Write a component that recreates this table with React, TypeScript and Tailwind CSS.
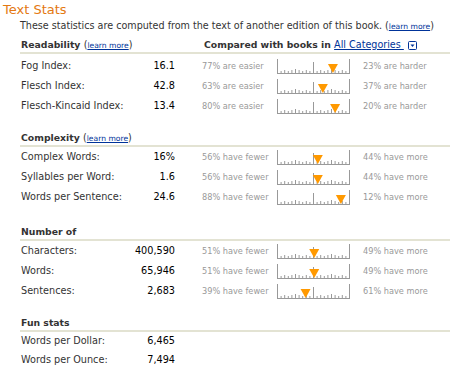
import React from "react";

type Row = {
  label: string;
  value: string;
  pct?: number; // marker position, 0-100
  left?: string;
  right?: string;
};

type Section = {
  title: string;
  learn?: boolean;
  compare?: boolean;
  gap: string;
  rows: Row[];
};

const sections: Section[] = [
  {
    title: "Readability",
    learn: true,
    compare: true,
    gap: "mt-[6px]",
    rows: [
      { label: "Fog Index:", value: "16.1", pct: 77, left: "77% are easier", right: "23% are harder" },
      { label: "Flesch Index:", value: "42.8", pct: 63, left: "63% are easier", right: "37% are harder" },
      { label: "Flesch-Kincaid Index:", value: "13.4", pct: 80, left: "80% are easier", right: "20% are harder" },
    ],
  },
  {
    title: "Complexity",
    learn: true,
    gap: "mt-[15px]",
    rows: [
      { label: "Complex Words:", value: "16%", pct: 56, left: "56% have fewer", right: "44% have more" },
      { label: "Syllables per Word:", value: "1.6", pct: 56, left: "56% have fewer", right: "44% have more" },
      { label: "Words per Sentence:", value: "24.6", pct: 88, left: "88% have fewer", right: "12% have more" },
    ],
  },
  {
    title: "Number of",
    gap: "mt-[18px]",
    rows: [
      { label: "Characters:", value: "400,590", pct: 51, left: "51% have fewer", right: "49% have more" },
      { label: "Words:", value: "65,946", pct: 51, left: "51% have fewer", right: "49% have more" },
      { label: "Sentences:", value: "2,683", pct: 39, left: "39% have fewer", right: "61% have more" },
    ],
  },
  {
    title: "Fun stats",
    gap: "mt-[15px]",
    rows: [
      { label: "Words per Dollar:", value: "6,465" },
      { label: "Words per Ounce:", value: "7,494" },
    ],
  },
];

const Learn = () => (
  <span className="text-[9.6px] font-normal text-[#333]">
    (<a href="#" className="text-[7.6px] text-[#003399] underline">learn more</a>)
  </span>
);

const Scale = ({ pct }: { pct: number }) => {
  const ticks = [];
  for (let i = 1; i < 20; i++) {
    let h = i % 2 ? 2 : 3;
    if (i === 10) h = 11;
    else if (i % 5 === 0) h = 4;
    const x = 0.5 + i * 3.6;
    ticks.push(<line key={i} x1={x} x2={x} y1={14 - h} y2={14} stroke="#999" strokeWidth="1" />);
  }
  const cx = 0.5 + (pct / 100) * 72;
  return (
    <svg width="74" height="15" viewBox="0 0 74 15" className="block">
      <line x1="0.5" x2="0.5" y1="0" y2="15" stroke="#999" />
      <line x1="72.5" x2="72.5" y1="0" y2="15" stroke="#999" />
      <line x1="0" x2="73" y1="14.5" y2="14.5" stroke="#999" />
      {ticks}
      <polygon points={`${cx - 5},5 ${cx + 5},5 ${cx},14`} fill="#ff9900" />
    </svg>
  );
};

export default function App() {
  return (
    <div className="w-[450px] h-[378px] bg-white text-[#333] font-['DejaVu_Sans',Verdana,sans-serif] overflow-hidden">
      <div className="h-[19px] pl-[3px] text-[13px] leading-[19px] text-[#e47911]">Text Stats</div>
      <div className="h-[13px] pl-[20px] text-[9.6px] leading-[13px] whitespace-nowrap">
        These statistics are computed from the text of another edition of this book. <Learn />
      </div>

      {sections.map((s) => (
        <div key={s.title} className={`${s.gap} pl-[20px]`}>
          <div className="flex h-[14px] items-center text-[9.3px] font-bold leading-[14px] whitespace-nowrap">
            <div className="w-[184px] pl-px">
              {s.title} {s.learn && <Learn />}
            </div>
            {s.compare && (
              <div className="flex items-center">
                Compared with books in&nbsp;
                <a href="#" className="text-[9.6px] font-normal text-[#003399] underline">All Categories&nbsp;</a>
                <svg width="9" height="9" viewBox="0 0 9 9" className="ml-[4px]">
                  <rect x="0.5" y="0.5" width="8" height="8" rx="1" fill="#fff" stroke="#003399" />
                  <polygon points="2.5,3.5 6.5,3.5 4.5,6" fill="#003399" />
                </svg>
              </div>
            )}
          </div>
          <div className="h-[2px] bg-[#e3e3d3]" />
          <div className={s.compare ? "pt-[2px]" : ""}>
            {s.rows.map((r) => (
              <div
                key={r.label}
                className={`flex items-center ${r.pct !== undefined ? "h-[20px]" : "h-[19px]"} whitespace-nowrap`}
              >
                <div className="flex w-[155px] justify-between pl-px text-[9.7px]">
                  <span>{r.label}</span>
                  <span className="text-black">{r.value}</span>
                </div>
                {r.pct !== undefined && (
                  <>
                    <div className="ml-[27px] w-[75px] text-[8.2px] text-[#999]">{r.left}</div>
                    <Scale pct={r.pct} />
                    <div className="ml-[12px] text-[8.2px] text-[#999]">{r.right}</div>
                  </>
                )}
              </div>
            ))}
          </div>
        </div>
      ))}
    </div>
  );
}
